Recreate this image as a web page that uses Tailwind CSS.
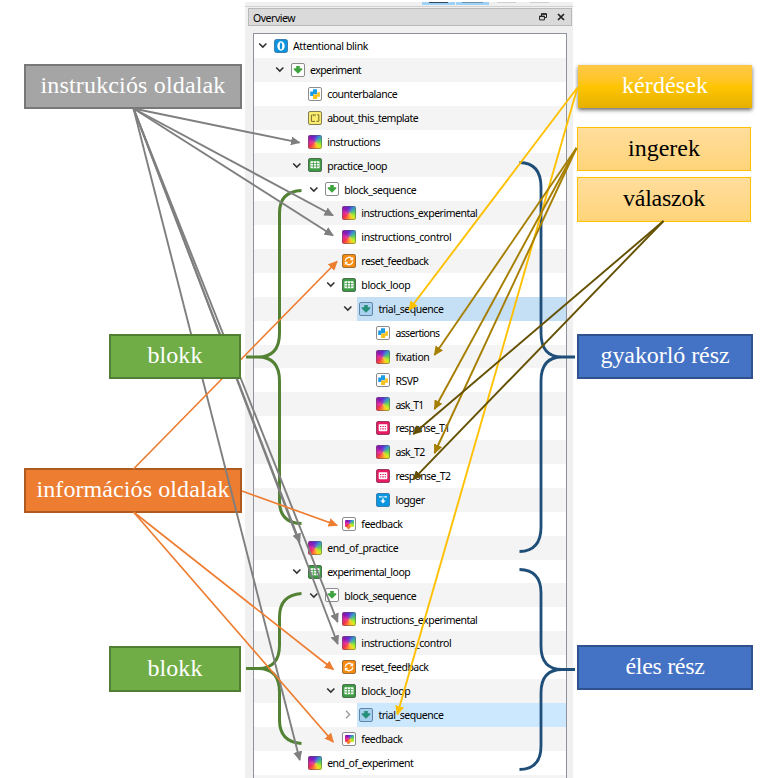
<!DOCTYPE html>
<html lang="hu">
<head>
<meta charset="utf-8">
<title>Overview</title>
<script src="https://cdn.jsdelivr.net/npm/@tailwindcss/browser@4"></script>
</head>
<body class="bg-white">
<svg width="0" height="0" class="absolute">
  <defs>
    <symbol id="opensesame" viewBox="0 0 14 14"><rect x=".5" y=".5" width="13" height="13" rx="2" fill="#0a93dc" stroke="#3a7fae"/><ellipse cx="7" cy="7" rx="3.7" ry="4.700" fill="#fff"/><ellipse cx="7" cy="7" rx="1.200" ry="3.500" fill="#0a93dc"/></symbol>
    <symbol id="sequence" viewBox="0 0 14 14"><rect x=".5" y=".5" width="13" height="13" rx="1.5" fill="#fff" stroke="#8c8c8c"/><path d="M5.200 3h3.600v2.300h2.500v1.200L7 10.700 2.700 6.500V5.300h2.500z" fill="#3fa43f"/></symbol>
    <symbol id="sequence-selected" viewBox="0 0 14 14"><rect x=".5" y=".5" width="13" height="13" rx="1.5" fill="#a9d0ee" stroke="#5f86a6"/><path d="M5.200 3h3.600v2.300h2.500v1.200L7 10.700 2.700 6.500V5.300h2.500z" fill="#279078"/></symbol>
    <symbol id="inline" viewBox="0 0 14 14"><rect x=".5" y=".5" width="13" height="13" rx="1.5" fill="#fff" stroke="#8c8c8c"/><path d="M5 2.200h4v5H5.600v1.700H2.200V4.600H5z" fill="#1b9be8"/><path d="M9.300 5.200h2.600v4.500H9.200v2.300H5.100V7.500h4.200z" fill="#fcc21b"/></symbol>
    <symbol id="notepad" viewBox="0 0 14 14"><rect x=".5" y=".5" width="13" height="13" rx="1.5" fill="#fbec6d" stroke="#827c54"/><path d="M3.400 3.800v6.600h3.600M9.200 3.800h1.600v6.500H8.500M5.200 3v2.200M7 3v2.200" fill="none" stroke="#756d30" stroke-width="1"/></symbol>
    <symbol id="loop" viewBox="0 0 14 14"><rect x=".5" y=".5" width="13" height="13" rx="1.5" fill="#3c9b43" stroke="#4d7050"/><rect x="2.500" y="3.200" width="9" height="7" rx=".5" fill="#fff"/><path d="M3 5.600h8M3 8h8M5.400 3.600v6.400M8.600 3.600v6.400" stroke="#3c9b43" stroke-width=".8"/></symbol>
    <symbol id="reset" viewBox="0 0 14 14"><rect x=".5" y=".5" width="13" height="13" rx="1.5" fill="#f98a0c" stroke="#9a713d"/><path d="M3.300 6.800A3.700 3.700 0 0 1 9.700 4.500M10.700 7.200A3.700 3.700 0 0 1 4.300 9.500" fill="none" stroke="#fff" stroke-width="1.400"/><path d="M11.200 2.800v3.500H7.700zM2.800 11.200V7.700h3.500z" fill="#fff"/></symbol>
    <symbol id="keyboard" viewBox="0 0 14 14"><rect x=".5" y=".5" width="13" height="13" rx="1.5" fill="#e91a63" stroke="#964060"/><rect x="2.700" y="3.200" width="8.600" height="7" rx=".6" fill="#fff"/><path d="M4 5.500h1.400M6.400 5.500h1.400M8.800 5.500h1.200M4 7.900h1.200M5.800 7.900h2.400M8.800 7.900h1.200" stroke="#e91a63" stroke-width="1"/></symbol>
    <symbol id="logger" viewBox="0 0 14 14"><rect x=".5" y=".5" width="13" height="13" rx="1.5" fill="#0a96e0" stroke="#3a7fae"/><path d="M3 3.800h2.800M8.200 3.800H11M6.500 3.800h1" stroke="#fff" stroke-width="1.200"/><path d="M6.200 5.400h1.600v2h1.900L7 10.400 4.300 7.400h1.900z" fill="#fff"/></symbol>
    <marker id="head-gray" markerUnits="userSpaceOnUse" markerWidth="10" markerHeight="9" refX="8.500" refY="4.500" orient="auto"><path d="M0 0 9.500 4.500 0 9z" fill="#7f7f7f"/></marker>
    <marker id="head-orange" markerUnits="userSpaceOnUse" markerWidth="10" markerHeight="9" refX="8.500" refY="4.500" orient="auto"><path d="M0 0 9.500 4.500 0 9z" fill="#ed7d31"/></marker>
    <marker id="head-yellow" markerUnits="userSpaceOnUse" markerWidth="10" markerHeight="9" refX="8.500" refY="4.500" orient="auto"><path d="M0 0 9.500 4.500 0 9z" fill="#ffc000"/></marker>
    <marker id="head-ochre" markerUnits="userSpaceOnUse" markerWidth="10" markerHeight="9" refX="8.500" refY="4.500" orient="auto"><path d="M0 0 9.500 4.500 0 9z" fill="#a67e00"/></marker>
    <marker id="head-brown" markerUnits="userSpaceOnUse" markerWidth="10" markerHeight="9" refX="8.500" refY="4.500" orient="auto"><path d="M0 0 9.500 4.500 0 9z" fill="#645000"/></marker>
  </defs>
</svg>
<main class="relative flex h-[778px] w-[774px] overflow-hidden bg-white font-['Liberation_Serif',serif] text-[24px] leading-none">
  <section class="flex w-[245px] flex-col items-end pt-[64px]">
    <div class="mr-[3px] flex h-[45px] w-[218px] items-center justify-center border-2 border-[#787878] bg-[#a5a5a5] pb-[3px] text-white"><span class="lbl whitespace-nowrap" data-w="185">instrukciós oldalak</span></div>
    <div class="relative z-20 mt-[225px] mr-1 flex h-[45px] w-[132px] items-center justify-center border-2 border-[#507e32] bg-[#70ad47] pb-[3px] text-white"><span class="lbl whitespace-nowrap" data-w="55">blokk</span></div>
    <div class="mt-[89px] mr-[3px] flex h-[45px] w-[218px] items-center justify-center border-2 border-[#ae5a21] bg-[#ed7d31] pb-[3px] text-white"><span class="lbl whitespace-nowrap" data-w="193">információs oldalak</span></div>
    <div class="relative z-20 mt-[133px] mr-1 flex h-[46px] w-[132px] items-center justify-center border-2 border-[#507e32] bg-[#70ad47] pb-[3px] text-white"><span class="lbl whitespace-nowrap" data-w="55">blokk</span></div>
  </section>

  <section class="mt-[2px] flex w-[328px] flex-col bg-[#f0f0f0] font-['Noto_Sans',sans-serif] text-[10.5px] text-black">
    <div class="flex h-[5px] border-b border-[#d0d0d0] pl-[177px]">
      <div class="h-[3px] w-[33px] bg-[#9fd0f5] px-[7px]"><div class="h-px bg-[#33475a]"></div></div>
      <div class="ml-px h-[3px] w-[33px] bg-[#9fd0f5] px-[6px]"><div class="h-px bg-[#6f93ac]"></div></div>
      <div class="ml-[8px] h-px w-[19px] bg-[#cfcfcf]"></div>
      <div class="ml-[14px] h-px w-[19px] bg-[#cfcfcf]"></div>
    </div>
    <header class="ml-[3px] mr-px mt-px flex h-[18px] items-center border border-[#b9b9b9] bg-[#dadada] pl-1 pr-[6px]">
      <span class="lbl pt-[2px]" data-w="42">Overview</span>
      <svg class="ml-auto" width="8" height="8" viewBox="0 0 8 8"><path d="M2.500 3V.9h5v3.700H5.600M.6 3.300h4.800v3.600H.6z" fill="none" stroke="#222"/><path d="M2.200 1h5.400M.3 3.400h5.400" stroke="#222" stroke-width="1.400"/></svg>
      <svg class="ml-[10px]" width="8" height="8" viewBox="0 0 8 8"><path d="m1 1 6 6M7 1 1 7" stroke="#222" stroke-width="1.700"/></svg>
    </header>
    <div id="tree" class="mt-[7px] ml-2 mr-[6px] flex-1 overflow-hidden border border-b-0 border-[#8e929c] bg-white"></div>
  </section>

  <section class="flex flex-1 flex-col pl-1 pt-[65px] text-black">
    <div class="ml-px flex h-[43px] w-[174px] items-center justify-center bg-linear-to-b from-[#ffc746] via-[#ffc500] to-[#e5b000] pb-[3px] text-white shadow-[0_2px_4px_rgba(0,0,0,0.6)]"><span class="lbl whitespace-nowrap" data-w="86">kérdések</span></div>
    <div class="mt-[19px] flex h-[44px] w-[174px] items-center justify-center border border-[#ffc000] bg-linear-to-b from-[#ffdd9c] to-[#ffd479] pb-[3px]"><span class="lbl whitespace-nowrap" data-w="72">ingerek</span></div>
    <div class="mt-[6px] flex h-[45px] w-[174px] items-center justify-center border border-[#ffc000] bg-linear-to-b from-[#ffdd9c] to-[#ffd479] pb-[4px]"><span class="lbl whitespace-nowrap" data-w="82">válaszok</span></div>
    <div class="mt-[112px] flex h-[45px] w-[176px] items-center justify-center border-2 border-[#2f528f] bg-[#4472c4] pb-[3px] text-white"><span class="lbl whitespace-nowrap" data-w="129">gyakorló rész</span></div>
    <div class="mt-[266px] flex h-[45px] w-[176px] items-center justify-center border-2 border-[#2f528f] bg-[#4472c4] pb-[3px] text-white"><span class="lbl whitespace-nowrap" data-w="79">éles rész</span></div>
  </section>

  <svg class="absolute inset-0 z-10" width="774" height="778" fill="none">
    <g stroke="#548235" stroke-width="3">
      <path d="M301.500 190.500Q279.500 191.500 279.500 213V333Q279.500 357 258 357H246M258 357Q279.500 357 279.500 381V501Q279.500 523 301.500 523.500"/>
      <path d="M301.500 593.500Q279.500 595 279.500 617V645Q279.500 668.500 258 668.500H246M258 668.500Q279.500 668.500 279.500 692V720Q279.500 742 301.500 743.500"/>
    </g>
    <g stroke="#1f4e79" stroke-width="2.800">
      <path d="M519.500 162.500Q541 163 541 187V333Q541 357 562 357H575M562 357Q541 357 541 381V527Q541 551 519.500 551.500"/>
      <path d="M519.500 569.500Q541 570 541 593V646Q541 669.500 562 669.500H575M562 669.500Q541 669.500 541 693V746Q541 769 519.500 769.500"/>
    </g>
    <g stroke="#7f7f7f" stroke-width="1.900">
      <path marker-end="url(#head-gray)" d="M133.500 108.500 299.500 142.600"/>
      <path marker-end="url(#head-gray)" d="M133.500 108.500 333 215.500"/>
      <path marker-end="url(#head-gray)" d="M133.500 108.500 333 235.500"/>
      <path marker-end="url(#head-gray)" d="M133.500 108.500 299.700 542"/>
      <path marker-end="url(#head-gray)" d="M133.500 108.500 337.600 622"/>
      <path marker-end="url(#head-gray)" d="M133.500 108.500 337.800 644"/>
      <path marker-end="url(#head-gray)" d="M133.500 108.500 299.800 760"/>
    </g>
    <g stroke="#ed7d31" stroke-width="1.700">
      <path marker-end="url(#head-orange)" d="M133.500 469 337 261.500"/>
      <path marker-end="url(#head-orange)" d="M242 491 337 525.300"/>
      <path marker-end="url(#head-orange)" d="M133.500 512 333.300 669.500"/>
      <path marker-end="url(#head-orange)" d="M133.500 512 333.300 742"/>
    </g>
    <g stroke="#ffc000" stroke-width="1.900">
      <path marker-end="url(#head-yellow)" d="M577.500 87.500 409 310"/>
      <path marker-end="url(#head-yellow)" d="M577.500 87.500 397.300 714.500"/>
    </g>
    <g stroke="#a67e00" stroke-width="1.900">
      <path marker-end="url(#head-ochre)" d="M576.500 148 434.500 355"/>
      <path marker-end="url(#head-ochre)" d="M576.500 148 434.500 409"/>
      <path marker-end="url(#head-ochre)" d="M576.500 148 434.500 453"/>
    </g>
    <g stroke="#645000" stroke-width="1.900">
      <path marker-end="url(#head-brown)" d="M663.500 221 413.300 434"/>
      <path marker-end="url(#head-brown)" d="M663.500 221 413.300 479.300"/>
    </g>
  </svg>
</main>

<script>
// Each row: [depth, icon, name, text width, expander state]
const rows = [
  [0,'opensesame','Attentional blink',75,'open'],
  [1,'sequence','experiment',51,'open'],
  [2,'inline','counterbalance',70],
  [2,'notepad','about_this_template',91],
  [2,'sketchpad','instructions',53],
  [2,'loop','practice_loop',60,'open'],
  [3,'sequence','block_sequence',72,'open'],
  [4,'sketchpad','instructions_experimental',116],
  [4,'sketchpad','instructions_control',90],
  [4,'reset','reset_feedback',67],
  [4,'loop','block_loop',49,'open'],
  [5,'sequence-selected','trial_sequence',65,'open','hover'],
  [6,'inline','assertions',44],
  [6,'sketchpad','fixation',34],
  [6,'inline','RSVP',23],
  [6,'sketchpad','ask_T1',28],
  [6,'keyboard','response_T1',54],
  [6,'sketchpad','ask_T2',29],
  [6,'keyboard','response_T2',55],
  [6,'logger','logger',29],
  [4,'feedback','feedback',41],
  [2,'sketchpad','end_of_practice',71],
  [2,'loop','experimental_loop',83,'open'],
  [3,'sequence','block_sequence',72,'open'],
  [4,'sketchpad','instructions_experimental',116],
  [4,'sketchpad','instructions_control',90],
  [4,'reset','reset_feedback',67],
  [4,'loop','block_loop',49,'open'],
  [5,'sequence-selected','trial_sequence',65,'closed','selected'],
  [4,'feedback','feedback',41],
  [2,'sketchpad','end_of_experiment',86]
];
const rainbow = 'bg-[radial-gradient(circle,#e890a070,transparent_50%),conic-gradient(#5a30d8,#3a90d0_40deg,#50d060_80deg,#c0f020_125deg,#ffd020_155deg,#ff7030_200deg,#f03050_230deg,#e028a0_270deg,#8a18b0_315deg,#5a30d8)]';
const icon = n => {
  if (n === 'sketchpad') return `<i class="size-[14px] rounded-[2px] ${rainbow} shadow-[inset_0_0_0_1px_#5a505a80]"></i>`;
  if (n === 'feedback') return `<i class="relative size-[14px] rounded-[2px] border border-[#8c8c8c] bg-white"><b class="absolute top-[2px] left-[1.500px] h-[7px] w-[9px] rounded-[1px] ${rainbow}"></b><b class="absolute top-[8px] left-[4px] size-[3px] rotate-45 bg-[#f08030]"></b></i>`;
  return `<svg class="size-[14px]"><use href="#${n}"/></svg>`;
};
const expander = s => s === 'open'
  ? '<svg width="10" height="9" viewBox="0 0 10 9"><path d="m1.200 2.500 3.600 3.600 3.600-3.600" fill="none" stroke="#333" stroke-width="1.600"/></svg>'
  : s === 'closed' ? '<svg width="9" height="9" viewBox="0 0 9 9"><path d="m3 .8 3.600 3.700L3 8.200" fill="none" stroke="#999" stroke-width="1.300"/></svg>' : '';
document.getElementById('tree').innerHTML = rows.concat([null]).map((r, i) => {
  const stripe = i % 2 ? 'bg-[#f4f4f4]' : 'bg-white';
  if (!r) return `<div class="h-[23.900px] ${stripe}"></div>`;
  const [d, ic, name, w, ex, sel] = r;
  const fill = sel === 'hover' ? 'bg-[#c5dff5]' : sel === 'selected' ? 'bg-[#cce8ff]' : '';
  return `<div class="flex h-[23.900px] ${stripe}" style="padding-left:${4 + d * 17.08}px"><span class="flex w-[14px] shrink-0 items-center">${expander(ex)}</span><div class="flex flex-1 items-center gap-[5px] pl-[2px] ${fill}">${icon(ic)}<span class="lbl whitespace-nowrap pt-px" data-w="${w}">${name}</span></div></div>`;
}).join('');
// Fit each label to its width by adjusting tracking
const pen = document.createElement('canvas').getContext('2d');
document.querySelectorAll('.lbl').forEach(e => {
  const inPanel = e.closest('#tree, header');
  pen.font = inPanel ? '10.5px "Noto Sans"' : '24px "Liberation Serif"';
  const have = pen.measureText(e.textContent).width;
  e.style.letterSpacing = ((+e.dataset.w - have) / e.textContent.length) + 'px';
});
</script>
</body>
</html>
